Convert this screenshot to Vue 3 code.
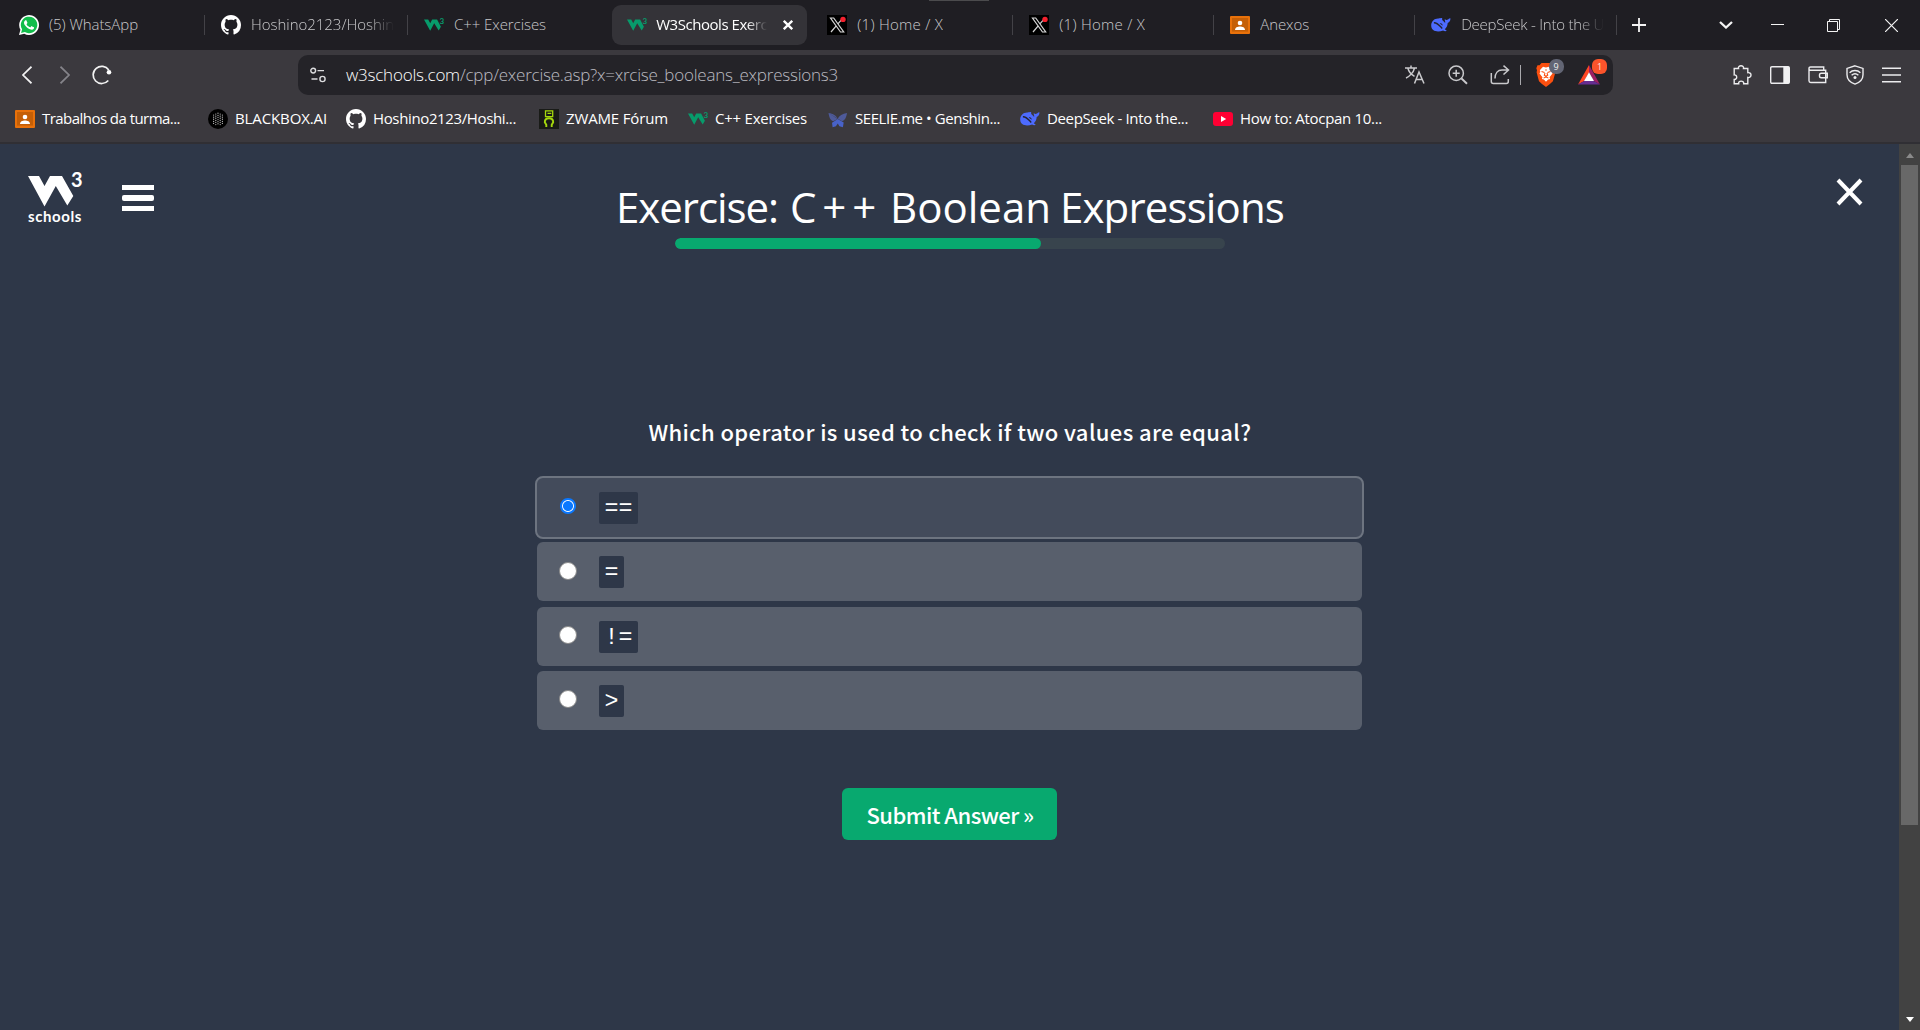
<script setup>
const tabs = [
  { icon: 'whatsapp', title: '(5) WhatsApp', width: 89 },
  { icon: 'github', title: 'Hoshino2123/Hoshin', width: 143, faded: true },
  { icon: 'w3', title: 'C++ Exercises', width: 92 },
  { icon: 'w3', title: 'W3Schools Exerc', width: 111, faded: true, active: true },
  { icon: 'x', title: '(1) Home / X', width: 86 },
  { icon: 'x', title: '(1) Home / X', width: 86 },
  { icon: 'classroom', title: 'Anexos', width: 49 },
  { icon: 'deepseek', title: 'DeepSeek - Into the U', width: 143, faded: true },
]

const bookmarks = [
  { icon: 'classroom', title: 'Trabalhos da turma...', width: 138 },
  { icon: 'blackbox', title: 'BLACKBOX.AI', width: 92 },
  { icon: 'github', title: 'Hoshino2123/Hoshi...', width: 143 },
  { icon: 'zwame', title: 'ZWAME Fórum', width: 102 },
  { icon: 'w3', title: 'C++ Exercises', width: 92 },
  { icon: 'butterfly', title: 'SEELIE.me • Genshin...', width: 145 },
  { icon: 'deepseek', title: 'DeepSeek - Into the...', width: 141 },
  { icon: 'youtube', title: 'How to: Atocpan 10...', width: 142 },
]

const heading = [
  { word: 'Exercise:', width: 162 },
  { word: 'C++', width: 92 },
  { word: 'Boolean', width: 161 },
  { word: 'Expressions', width: 224 },
]

const options = [
  { value: '==', checked: true },
  { value: '=' },
  { value: '!=' },
  { value: '>' },
]

// Tracks a label so that it fills the given width in pixels.
const vFit = {
  mounted(el, { value }) {
    const natural = el.getBoundingClientRect().width
    el.style.letterSpacing = `${(value - natural) / el.textContent.length}px`
  },
}
</script>

<template>
  <svg class="sprite" aria-hidden="true">
    <symbol id="whatsapp" viewBox="0 0 24 24">
      <path fill="#fff" d="M0 24l1.7-6.2A11.9 11.9 0 1 1 6.3 22.4z" />
      <path fill="#12bd4b" d="M2.5 21.5l1.2-4.3A9.9 9.9 0 1 1 7 20.4z" />
      <path fill="#fff" d="M17.472 14.382c-.297-.149-1.758-.867-2.03-.967-.273-.099-.471-.148-.67.15-.197.297-.767.966-.94 1.164-.173.199-.347.223-.644.075-.297-.15-1.255-.463-2.39-1.475-.883-.788-1.48-1.761-1.653-2.059-.173-.297-.018-.458.13-.606.134-.133.298-.347.446-.52.149-.174.198-.298.298-.497.099-.198.05-.371-.025-.52-.075-.149-.669-1.612-.916-2.207-.242-.579-.487-.5-.669-.51-.173-.008-.371-.01-.57-.01-.198 0-.52.074-.792.372-.272.297-1.04 1.016-1.04 2.479 0 1.462 1.065 2.875 1.213 3.074.149.198 2.096 3.2 5.077 4.487.709.306 1.262.489 1.694.625.712.227 1.36.195 1.871.118.571-.085 1.758-.719 2.006-1.413.248-.694.248-1.289.173-1.413-.074-.124-.272-.198-.57-.347" />
    </symbol>
    <symbol id="github" viewBox="0 0 16 16">
      <path fill="#fff" d="M8 0C3.58 0 0 3.58 0 8c0 3.54 2.29 6.53 5.47 7.59.4.07.55-.17.55-.38 0-.19-.01-.82-.01-1.49-2.01.37-2.53-.49-2.69-.94-.09-.23-.48-.94-.82-1.13-.28-.15-.68-.52-.01-.53.63-.01 1.08.58 1.23.82.72 1.21 1.87.87 2.33.66.07-.52.28-.87.51-1.07-1.78-.2-3.64-.89-3.64-3.95 0-.87.31-1.59.82-2.15-.08-.2-.36-1.02.08-2.12 0 0 .67-.21 2.2.82.64-.18 1.32-.27 2-.27s1.36.09 2 .27c1.53-1.04 2.2-.82 2.2-.82.44 1.1.16 1.92.08 2.12.51.56.82 1.27.82 2.15 0 3.07-1.87 3.75-3.65 3.95.29.25.54.73.54 1.48 0 1.07-.01 1.93-.01 2.2 0 .21.15.46.55.38A8.01 8.01 0 0 0 16 8c0-4.42-3.58-8-8-8z" />
    </symbol>
    <symbol id="w3" viewBox="0 0 20 20">
      <path fill="#079b6b" d="M0 4.500h4.200l2 3.700 2-3.700h4.900l3.800 7.300-2.200 3.700-4.500-7.200-4 7.400z" />
    </symbol>
    <symbol id="x" viewBox="0 0 20 20">
      <path fill="#000" d="M0 0h20v20H0z" />
      <path fill="none" stroke="#d6d6d6" stroke-width="1.2" d="M3.500 3h3.200l10 14h-3.200zM16 3.200l-5.100 5.700M9 11.200L4 17" />
      <circle cx="16" cy="4.400" r="2.700" fill="#f4212e" />
    </symbol>
    <symbol id="classroom" viewBox="0 0 20 20">
      <rect y="1" width="20" height="18" rx="1" fill="#e8710a" />
      <path fill="#c55f06" d="M2 3h16v13.600H2z" />
      <circle cx="10" cy="8" r="2.300" fill="#fff" />
      <path fill="#fff" d="M5 15c0-2.700 2.500-3.600 5-3.600s5 .9 5 3.600z" />
    </symbol>
    <symbol id="deepseek" viewBox="0 0 20 20">
      <path fill="#4d6bfe" d="M.2 10.500C.2 6.200 3.500 3.400 7.200 3.500c2.300.1 3-.8 3.900-.2.500.5-.2 1.200.2 1.800.8 1.100 2.200 1.700 2.800 3 .5-1.500-.6-2.200-.3-4 .8 1.100 2.200 1.100 3.100.5.900-.6 1.200-1.500 2.500-1.300.2 2.400-1 4.100-2.700 4.800-.2 3-1.300 4.900-2.900 6.200l2 1.500c-1.400.6-2.600.3-3.700-.3C6.600 17.600.2 16.400.2 10.500z" />
      <path fill="none" stroke="#242532" stroke-width="1.400" d="M2.900 7.800c3.700-.2 5.900 3.300 8.300 5.600" />
      <path fill="#242532" d="M8.800 8.400c1.500-.5 3 .4 2.900 2.300-.7-.8-1.700-1.200-2.900-2.300z" />
    </symbol>
    <symbol id="blackbox" viewBox="0 0 20 20">
      <circle cx="10" cy="10" r="10" fill="#000" />
      <path fill="none" stroke="#b9b9b9" stroke-width="1.200" stroke-linecap="round" stroke-dasharray=".1 2" d="M10 4.200v12M7.800 5v11M12.200 5v11M5.600 6v8.500M14.400 6v8.500" />
    </symbol>
    <symbol id="zwame" viewBox="0 0 20 20">
      <path fill="#191b17" d="M0 0h20v20H0z" />
      <path fill="none" stroke="#a5d80d" stroke-width="1.300" d="M6.500 1.800h7.200v5.800H6.500zM8.500 4.300h3.800" />
      <path fill="none" stroke="#a5d80d" stroke-width="1.900" d="M7.300 18v-2.300l-1.500-2.500C5.800 9.500 8 9.200 10 9.200s4.200.3 4.200 4l-1.500 2.500V18" />
    </symbol>
    <symbol id="butterfly" viewBox="0 0 20 20">
      <path fill="#4e5a9a" d="M.5 4C5 4.500 8.500 6.500 9.600 10 11 6.500 14.500 4.500 19 4c-.6 4-1.700 7.200-5 8.300z M9.600 10L5.200 12.300C2 11.200 1.200 8 .5 4z" />
      <path fill="#4862c8" d="M9.700 10l6 3.600-.8 4.700-3.500-1.100-1.600-2.600-1.900 2.700-3.300 1-.6-4.600z" />
    </symbol>
    <symbol id="youtube" viewBox="0 0 20 20">
      <rect y="3" width="20" height="14" rx="3" fill="#ff0033" />
      <path fill="#fff" d="M8 7l5.200 3L8 13z" />
    </symbol>
    <symbol id="brave" viewBox="0 0 20 24">
      <path fill="#fb5010" d="M5.500 0h9l2 2.300 2-.1 1.200 3-.7 2 .4 2-2.500 9-3 2.700L10 24l-4-3.100-3-2.700L.6 9.200l.4-2-.7-2 1.200-3 2 .1z" />
      <path fill="#fff" d="M10 4.500l3-.8 3.200 3.600-.5 1.400.8 1.900-3 3.600.6 1.900-2 .5L10 18.700l-2.100-2.100-2-.5.600-1.900-3-3.600.8-1.900-.5-1.400L7 3.700z" />
      <path fill="none" stroke="#fb5010" stroke-width="1.100" d="M5.500 8.400l3 1M14.500 8.400l-3 1M10 6.200v1.500M9 10l-.7 2.300 1.700 1 1.700-1L11 10M7.600 14.900l2.400-.8 2.400.8" />
    </symbol>
    <symbol id="bat" viewBox="0 0 22 20">
      <path fill="#ff4724" d="M11 0v7.500L6.200 16 0 19.500z" />
      <path fill="#9e1f63" d="M11 0l11 19.500L15.800 16 11 7.500z" />
      <path fill="#662d91" d="M0 19.500L6.200 16h9.600l6.200 3.500z" />
      <path fill="#fff" d="M11 7.200l5 8.800H6z" />
    </symbol>
  </svg>

  <div class="window">
    <header class="tabstrip">
      <span class="grip"></span>
      <div class="tabs">
        <div v-for="(tab, i) in tabs" :key="i" class="tab" :class="{ active: tab.active, ruled: i !== 2 && i !== 3 }">
          <svg class="favicon">
            <use :href="`#${tab.icon}`" />
            <text v-if="tab.icon === 'w3'" class="w3-digit" x="15.400" y="9.300">3</text>
          </svg>
          <span class="tab-clip" :class="{ faded: tab.faded }"><span v-fit="tab.width" class="label">{{ tab.title }}</span></span>
          <svg v-if="tab.active" class="tab-close" viewBox="0 0 10 10"><path d="M.8.8l8.400 8.400M9.200.8L.8 9.200" /></svg>
        </div>
      </div>
      <div class="window-controls">
        <svg width="14" height="14" viewBox="0 0 14 14"><path stroke-width="1.800" d="M7 0v14M0 7h14" /></svg>
        <svg class="chevron" width="14" height="8" viewBox="0 0 14 8"><path stroke-width="2.300" d="M1 1l6 5.500L13 1" /></svg>
        <svg class="minimize" width="13" height="13" viewBox="0 0 13 13"><path d="M0 5.500h13" /></svg>
        <svg class="restore" width="13" height="13" viewBox="0 0 13 13"><path d="M.5 2.500h10v10H.5zM2.500 2.500v-2h10v10h-2" /></svg>
        <svg class="close" width="13" height="13" viewBox="0 0 13 13"><path stroke-width="1.200" d="M0 0l13 13M13 0L0 13" /></svg>
      </div>
    </header>

    <div class="toolbar">
      <div class="nav">
        <svg width="10" height="18" viewBox="0 0 10 18"><path d="M9.500.7L1 9l8.500 8.300" /></svg>
        <svg class="dim" width="10" height="18" viewBox="0 0 10 18"><path d="M.5.700L9 9 .5 17.300" /></svg>
        <svg class="reload" width="20" height="20" viewBox="0 0 20 20"><path d="M16.800 5A8.600 8.600 0 1 0 16.300 15.500" /><circle cx="17" cy="7.200" r="2.300" /></svg>
      </div>
      <div class="address">
        <svg class="site" width="16" height="16" viewBox="0 0 16 16">
          <circle cx="3.200" cy="3.600" r="2.400" /><path d="M7.500 3.600H14M1.500 12h6" /><circle cx="12.500" cy="12" r="2.600" />
        </svg>
        <span v-fit="492" class="url"><b>w3schools.com</b>/cpp/exercise.asp?x=xrcise_booleans_expressions3</span>
        <div class="address-tools">
          <svg width="20" height="20" viewBox="0 0 20 20"><path d="M0 3h12M6 .5V3M2.800 3c1 4 4.200 7 6.700 8.300M9.500 3C8.500 7.500 4.500 11.500 1 13M9.500 18.500L14 7l5 11.500M11.200 14.500h5.900" /></svg>
          <svg width="20" height="20" viewBox="0 0 20 20"><circle cx="8.200" cy="8.200" r="7.200" /><path stroke-width="1.900" d="M13.500 13.500l5.500 5.300" /><path d="M8.200 4.700v7M4.700 8.200h7" /></svg>
          <svg width="20" height="20" viewBox="0 0 20 20"><path d="M1.300 8v8.500q0 2 2 2h13q2 0 2-2V14M5 13.500C5 8 8 5 12 5h6M13.500.6L18.500 5l-5 4.500" /></svg>
          <i class="rule"></i>
          <span class="shield"><svg width="20" height="24"><use href="#brave" /></svg><em class="count muted">9</em></span>
          <span class="rewards"><svg width="22" height="20"><use href="#bat" /></svg><em class="count">1</em></span>
        </div>
      </div>
      <div class="actions">
        <svg width="20" height="20" viewBox="0 0 20 20"><path stroke-width="1.400" d="M2.200 3.500h4.300C6 1.800 7.400.8 9 .8s3 1 2.500 2.700h4.300v4.200c1.800-.5 3.200.8 3.200 2.300s-1.400 3-3.200 2.500v6.200h-4.100c.2-1.600-1-2.600-2.600-2.600s-2.700 1-2.400 2.600H2.200v-4.200c1.700.2 2.500-1.200 2.500-2.300s-.8-2.500-2.500-2.300z" /></svg>
        <svg width="20" height="18" viewBox="0 0 20 18"><rect x=".7" y=".7" width="18.600" height="16.600" rx="1.200" /><path fill="#f1f1f2" stroke="none" d="M13.300.5H18q1.500 0 1.500 1.500v14q0 1.500-1.500 1.500h-4.700z" /></svg>
        <svg width="20" height="18" viewBox="0 0 20 18"><path d="M1 2.300v12.500q0 1.700 1.700 1.700h15V4.300H2.300Q1 4.300 1 2.300 1 1 2.500 1h13.200v3M19.300 7.200h-6q-1.800 0-1.800 1.800v1q0 1.800 1.800 1.800h6z" /></svg>
        <svg width="18" height="20" viewBox="0 0 18 20"><path d="M9 .8l8 2.600v6.300c0 4.600-3 7.600-8 9.400-5-1.800-8-4.800-8-9.400V3.400z" /><path d="M3.600 7.800c3-3 7.800-3 10.800 0M5.600 10.300c2-1.900 4.800-1.900 6.800 0" /><circle cx="9" cy="12.500" r="1.500" fill="#eee" stroke="none" /></svg>
        <svg width="19" height="16" viewBox="0 0 19 16"><path d="M0 1.200h19M0 8h19M0 14.700h19" /></svg>
      </div>
    </div>

    <nav class="bookmarks">
      <div v-for="(mark, i) in bookmarks" :key="i" class="bookmark">
        <svg class="favicon">
          <use :href="`#${mark.icon}`" />
          <text v-if="mark.icon === 'w3'" class="w3-digit" x="15.400" y="9.300">3</text>
        </svg>
        <span v-fit="mark.width" class="label">{{ mark.title }}</span>
      </div>
    </nav>

    <div class="viewport">
      <main class="page">
        <div class="page-head">
          <div class="brand">
            <div class="brand-mark">
              <svg width="46" height="32" viewBox="0 0 46 32"><path fill="#fff" d="M0 1h11l5.500 10L22 1h12l11.300 20-6 9.500L27.800 11 16.500 31.500z" /></svg>
              <span class="brand-digit">3</span>
            </div>
            <span v-fit="54" class="brand-name">schools</span>
          </div>
          <div class="burger"><i></i><i></i><i></i></div>
          <div class="heading">
            <h1><span v-for="part in heading" :key="part.word" v-fit="part.width">{{ part.word }}</span></h1>
            <div class="progress"><div class="progress-done"></div></div>
          </div>
          <svg class="dismiss" width="27" height="28" viewBox="0 0 27 28"><path d="M2 2l23 24M25 2L2 26" /></svg>
        </div>

        <form class="exercise">
          <p class="question"><span v-fit="603">Which operator is used to check if two values are equal?</span></p>
          <div class="options">
            <label v-for="option in options" :key="option.value" class="option" :class="{ selected: option.checked }">
              <span class="radio"></span>
              <code>{{ option.value }}</code>
            </label>
          </div>
          <button type="button" class="submit"><span v-fit="167">Submit Answer »</span></button>
        </form>
      </main>
      <aside class="scrollbar">
        <i class="arrow up"></i>
        <div class="thumb"></div>
        <i class="arrow down"></i>
      </aside>
    </div>
  </div>
</template>

<style>
body { margin: 0; background: #2e3748; overflow: hidden; }
</style>

<style scoped>
.sprite { position: absolute; width: 0; height: 0; }
.w3-digit { font: 700 8px "Lato", sans-serif; fill: #079b6b; }
.window {
  display: flex; flex-direction: column; width: 1920px; height: 1030px;
  font-family: "Open Sans", "Noto Sans", sans-serif; color: #fff;
}
.window svg { flex: none; display: block; }
.label { white-space: pre; display: inline-block; }
.favicon { width: 20px; height: 20px; }

.tabstrip { position: relative; display: flex; height: 50px; background: #1f1e23; }
.grip { position: absolute; left: 929px; top: 0; width: 60px; height: 1px; background: #4b4b4d; }
.tabs { display: grid; grid-template-columns: 202px 203px 201.200px 202px 202px 201px 201px 202px; padding-left: 3px; }
.tab {
  display: flex; align-items: center; box-sizing: border-box; height: 50px; padding-left: 16px;
  position: relative; font-size: 15px; font-weight: 300; color: #c9c9cb;
}
.tab .label { height: 22px; line-height: 20px; }
.tab.ruled::after { content: ""; position: absolute; right: 0; top: 15px; width: 1px; height: 20px; background: #434247; }
.tab-clip { margin-left: 10px; overflow: hidden; white-space: nowrap; height: 22px; }
.tab-clip.faded { -webkit-mask-image: linear-gradient(90deg, #000 82%, transparent 100%); mask-image: linear-gradient(90deg, #000 82%, transparent 100%); }
.tab.active { height: 40px; width: 195px; margin: 5px 0 0 3px; padding-left: 15px; border-radius: 9px; background: #343338; color: #fff; font-weight: 400; }
.tab.active .tab-clip { margin-left: 9px; }
.tab-close { width: 10px; height: 10px; margin-left: 16px; stroke: #fff; stroke-width: 2.300; }
.window-controls { display: flex; align-items: center; padding-left: 14.800px; }
.window-controls svg { stroke: #f4f4f4; fill: none; }
.chevron { margin-left: 73px; }
.minimize { margin-left: 38px; }
.restore { margin-left: 43px; }
.close { margin-left: 45px; }

.toolbar { display: flex; height: 50px; background: #3b393e; }
.nav { display: flex; align-items: center; width: 276px; padding-left: 22px; height: 50px; }
.nav svg { fill: none; stroke: #f2f2f2; stroke-width: 1.700; margin-right: 28px; }
.nav .dim { stroke: #85848a; margin-right: 22px; }
.nav .reload circle { fill: #fff; stroke: none; }
.address {
  display: flex; align-items: center; box-sizing: border-box; width: 1315px; height: 40px; margin-top: 5px;
  padding: 0 6px 0 12px; border-radius: 10px; background: #242328;
}
.site { fill: none; stroke: #dcdcde; stroke-width: 1.400; }
.url { margin-left: 20px; font-size: 17px; font-weight: 300; line-height: 24px; color: #bdbcc2; white-space: nowrap; }
.url b { font-weight: 300; color: #fff; }
.address-tools { display: flex; align-items: center; margin-left: auto; gap: 22.500px; }
.address-tools > svg { fill: none; stroke: #c9c9cc; stroke-width: 1.500; }
.address-tools > svg:nth-child(2) { margin: 0 -1px 0 1px; }
.rule { width: 1px; height: 20px; background: #a9a9ad; margin: 0 -7.500px 0 -12.500px; }
.shield, .rewards { position: relative; }
.rewards { margin-right: 7px; }
.count {
  position: absolute; left: 13px; top: -4px; width: 15px; height: 15px; border-radius: 6px;
  background: #fb542b; color: #ffe6df; font: 400 9px/15px "Open Sans", sans-serif; text-align: center;
}
.rewards .count { left: 14px; top: -6px; }
.count.muted { background: #626574; color: #eee; border-radius: 7px; }
.actions { display: flex; align-items: center; height: 50px; padding-left: 119px; gap: 18px; }
.actions svg { fill: none; stroke: #ececee; stroke-width: 1.400; }

.bookmarks {
  display: grid; grid-template-columns: 193px 138px 193px 149px 140px 192px 193px 180px;
  box-sizing: border-box; height: 44px; padding: 0 0 4px 15px; align-items: center;
  background: #3b393e; border-bottom: 2px solid #302f34; font-size: 15px;
}
.bookmark { display: flex; align-items: center; gap: 7px; }
.bookmark .label { height: 22px; line-height: 20px; }

.viewport { display: flex; flex: 1; min-height: 0; background: #2e3748; }
.page { flex: 1; }
.page-head { display: flex; align-items: flex-start; height: 120px; padding: 0 36px 0 28px; }
.brand { width: 94px; padding-top: 28px; }
.brand-mark { display: flex; height: 36px; padding-top: 3px; box-sizing: border-box; }
.brand-digit { font: 700 20px/20px "Lato", sans-serif; margin: -6px 0 0 -3px; }
.brand-name { display: block; width: max-content; font: 700 15px/16px "Lato", sans-serif; white-space: nowrap; }
.burger { display: flex; flex-direction: column; justify-content: space-between; width: 32px; height: 26px; margin-top: 41px; }
.burger i { height: 5px; background: #fff; }
.burger i:nth-child(2) { height: 6px; border-radius: 2px; }
.heading { display: flex; flex-direction: column; align-items: center; margin-left: 460px; width: 672px; }
h1 {
  display: grid; grid-template-columns: 174px 100px 170px 226px; justify-items: start;
  margin: 33px 0 0 2px; height: 61px; font-size: 42px; line-height: 60px; font-weight: 400; white-space: nowrap;
}
h1 span, .question span, .submit span { display: inline-block; }
.progress { width: 550px; height: 11px; border-radius: 6px; background: #38444d; overflow: hidden; }
.progress-done { width: 66.600%; height: 11px; border-radius: 6px; background: #08a96f; }
.dismiss { margin: 34px 0 0 auto; stroke: #fff; stroke-width: 4; }

.exercise { display: flex; flex-direction: column; align-items: center; }
.question { margin: 147px 0 0 1px; height: 43px; font: 500 22px/40px "Noto Sans CJK SC", "Open Sans", sans-serif; white-space: nowrap; }
.options { display: flex; flex-direction: column; align-items: center; gap: 5.300px; margin-top: 22px; width: 829px; }
.option {
  display: flex; align-items: center; box-sizing: border-box; width: 825px; height: 59px; padding-left: 22px;
  border-radius: 6px; background: #585f6c;
}
.option.selected { width: 829px; height: 63px; border: 2px solid #6d7480; background: #434b5b; border-radius: 8px; margin-bottom: -2px; }
.radio { box-sizing: border-box; width: 18px; height: 18px; margin-top: -2px; border-radius: 50%; border: 1px solid #8a8a8a; background: #fff; }
.selected .radio { width: 16px; height: 16px; margin-top: -3px; margin-left: 1px; margin-right: 1px; border: 2px solid #0a78ff; background: radial-gradient(circle, #0a78ff 0 4.600px, #fff 5.400px); }
code {
  box-sizing: border-box; height: 32px; margin-left: 22px; padding: 0 5.500px; border-radius: 2px; background: #2e3748;
  font: 400 23.300px/34px "Liberation Mono", monospace; margin-top: 1px;
}
.submit {
  width: 215px; height: 52px; margin-top: 58px; padding: 0 0 0 1px; border: 0; border-radius: 6px; background: #08a96f;
  color: #fff; font: 500 22px/50px "Noto Sans CJK SC", "Open Sans", sans-serif; white-space: nowrap;
}
.scrollbar { display: flex; flex-direction: column; align-items: center; width: 21px; background: #424242; }
.thumb { width: 17px; height: 660px; margin-top: 7px; background: #686868; }
.arrow { border: 4.500px solid transparent; border-width: 0 4.500px; }
.up { margin-top: 9px; border-bottom: 5px solid #8a8a8a; }
.down { margin: auto 0 8px; border-top: 5px solid #fff; }
</style>
